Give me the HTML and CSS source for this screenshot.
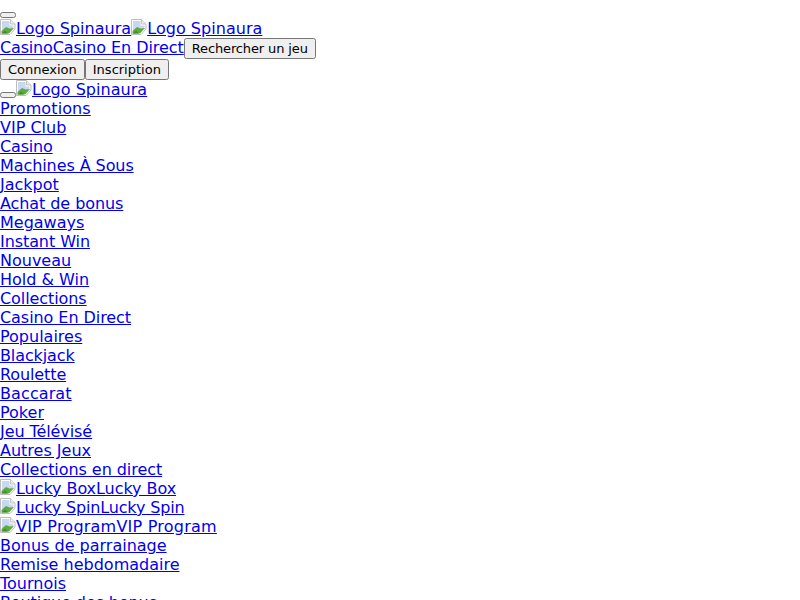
FILE: index.html
```html
<!DOCTYPE html>
<html lang="fr">
<head>
<meta charset="utf-8">
<title>Spinaura</title>
<link rel="stylesheet" href="styles.css">
</head>
<body>
<svg class="sprite" width="0" height="0" aria-hidden="true">
  <defs>
    <symbol id="broken" viewBox="0 0 16 16">
      <path d="M0.5 0.5H10.5L15 5V10L10 15.5H0.5Z" fill="#fff" stroke="#bdbdbd"/>
      <path d="M10.5 0.5V5H15" fill="#ececec" stroke="#c4c4c4"/>
      <path d="M2 2H9.5V6.5H13.5V9L2 12Z" fill="#c8d8f3"/>
      <path d="M1.5 14.5V12L6 8L9.5 9.5L14 9L9 14.5Z" fill="#5cab3c"/>
      <path d="M1.5 14.5L5 11.5L8 14.5Z" fill="#3f8f2d"/>
    </symbol>
  </defs>
</svg>
<header class="site-header">
  <div class="row"><button class="btn" type="button"></button></div>
  <div class="row">
    <a class="ls-logo" href="#"><svg class="broken"><use href="#broken"/></svg>Logo Spinaura</a><a class="ls-logo" href="#"><svg class="broken"><use href="#broken"/></svg>Logo Spinaura</a>
  </div>
  <div class="row">
    <a class="ls-n17" href="#">Casino</a><a class="ls-n06" href="#">Casino En Direct</a><button class="btn btn-search" type="button">Rechercher un jeu</button>
  </div>
  <div class="row">
    <button class="btn" type="button">Connexion</button><button class="btn" type="button">Inscription</button>
  </div>
</header>
<nav class="side-nav">
  <div class="row"><button class="btn" type="button"></button><a class="ls-logo" href="#"><svg class="broken"><use href="#broken"/></svg>Logo Spinaura</a></div>
  <div class="row"><a class="ls-p10" href="#">Promotions</a></div>
  <div class="row"><a href="#">VIP Club</a></div>
  <div class="row"><a class="ls-n17" href="#">Casino</a></div>
  <div class="row"><a class="ls-n08" href="#">Machines À Sous</a></div>
  <div class="row"><a href="#">Jackpot</a></div>
  <div class="row"><a class="ls-n08" href="#">Achat de bonus</a></div>
  <div class="row"><a href="#">Megaways</a></div>
  <div class="row"><a class="ls-n08" href="#">Instant Win</a></div>
  <div class="row"><a href="#">Nouveau</a></div>
  <div class="row"><a href="#">Hold &amp; Win</a></div>
  <div class="row"><a class="ls-n08" href="#">Collections</a></div>
  <div class="row"><a class="ls-n06" href="#">Casino En Direct</a></div>
  <div class="row"><a href="#">Populaires</a></div>
  <div class="row"><a class="ls-n11" href="#">Blackjack</a></div>
  <div class="row"><a class="ls-n11" href="#">Roulette</a></div>
  <div class="row"><a class="ls-p10" href="#">Baccarat</a></div>
  <div class="row"><a href="#">Poker</a></div>
  <div class="row"><a class="ls-n08" href="#">Jeu Télévisé</a></div>
  <div class="row"><a href="#">Autres Jeux</a></div>
  <div class="row"><a class="ls-n06" href="#">Collections en direct</a></div>
  <div class="row"><a class="ls-n06" href="#"><svg class="broken"><use href="#broken"/></svg>Lucky BoxLucky Box</a></div>
  <div class="row"><a class="ls-n15" href="#"><svg class="broken"><use href="#broken"/></svg>Lucky SpinLucky Spin</a></div>
  <div class="row"><a class="ls-p23" href="#"><svg class="broken"><use href="#broken"/></svg>VIP ProgramVIP Program</a></div>
  <div class="row"><a href="#">Bonus de parrainage</a></div>
  <div class="row"><a href="#">Remise hebdomadaire</a></div>
  <div class="row"><a href="#">Tournois</a></div>
  <div class="row"><a class="ls-n11" href="#">Boutique des bonus</a></div>
</nav>
</body>
</html>
```
FILE: styles.css
```css
html, body {
  margin: 0;
  padding: 0;
}
body {
  font-family: "DejaVu Sans", sans-serif;
  font-size: 16px;
  background: #fff;
}
.sprite {
  display: block;
  height: 0;
}
.btn {
  font-family: "DejaVu Sans", sans-serif;
  font-size: 13px;
  line-height: 15px;
}
.btn-search {
  letter-spacing: -0.13px;
}
.broken {
  width: 16px;
  height: 16px;
  vertical-align: -1px;
}
.ls-logo { letter-spacing: 0.04px; }
.ls-n17 { letter-spacing: -0.17px; }
.ls-n15 { letter-spacing: -0.15px; }
.ls-n11 { letter-spacing: -0.11px; }
.ls-n08 { letter-spacing: -0.08px; }
.ls-n06 { letter-spacing: -0.06px; }
.ls-p10 { letter-spacing: 0.1px; }
.ls-p23 { letter-spacing: 0.23px; }
```
